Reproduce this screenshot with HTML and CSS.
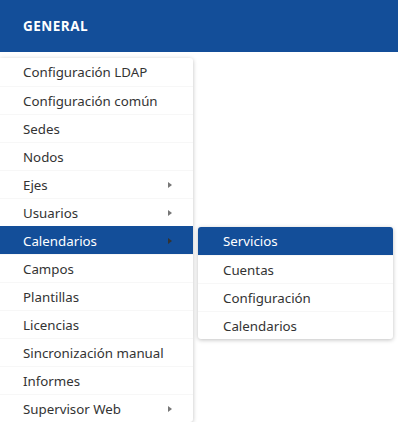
FILE: index.html
```html
<!DOCTYPE html>
<html>
<head>
<meta charset="utf-8">
<link rel="stylesheet" href="styles.css">
</head>
<body>
<header class="topbar"><span class="title">GENERAL</span></header>
<ul class="menu">
  <li class="item">Configuración LDAP</li>
  <li class="item">Configuración común</li>
  <li class="item">Sedes</li>
  <li class="item">Nodos</li>
  <li class="item has-sub">Ejes<span class="arrow"></span></li>
  <li class="item has-sub">Usuarios<span class="arrow"></span></li>
  <li class="item has-sub active">Calendarios<span class="arrow"></span>
    <ul class="menu submenu">
      <li class="item active">Servicios</li>
      <li class="item">Cuentas</li>
      <li class="item">Configuración</li>
      <li class="item">Calendarios</li>
    </ul>
  </li>
  <li class="item">Campos</li>
  <li class="item">Plantillas</li>
  <li class="item">Licencias</li>
  <li class="item">Sincronización manual</li>
  <li class="item">Informes</li>
  <li class="item has-sub">Supervisor Web<span class="arrow"></span></li>
</ul>
</body>
</html>
```
FILE: styles.css
```css
html, body {
  margin: 0;
  padding: 0;
  background: #ffffff;
  font-family: "Noto Sans", "Open Sans", sans-serif;
}
.topbar {
  height: 52px;
  background: #134e99;
  display: flex;
  align-items: center;
  padding-left: 23px;
}
.title {
  color: #ffffff;
  font-family: "Open Sans", sans-serif;
  font-weight: 700;
  font-size: 13.5px;
  letter-spacing: 0.5px;
}
.menu {
  list-style: none;
  margin: 6px 0 0 0;
  padding: 0;
  width: 193px;
  background: #fff;
  border-radius: 0 3px 3px 0;
  box-shadow: 0 1px 4px rgba(0,0,0,0.25);
}
.item {
  position: relative;
  height: 28px;
  line-height: 28px;
  padding-left: 23px;
  font-size: 13.3px;
  color: #333333;
  border-top: 1px solid #f7f7f7;
  box-sizing: border-box;
}
.item:first-child { border-top: none; }
.item.active {
  background: #134e99;
  color: #ffffff;
  border-top-color: #134e99;
}
.arrow {
  position: absolute;
  left: 168px;
  top: 11px;
  width: 0;
  height: 0;
  border-top: 3.5px solid transparent;
  border-bottom: 3.5px solid transparent;
  border-left: 4px solid #777;
}
.active > .arrow { border-left-color: #333; }
.submenu {
  position: absolute;
  left: 198px;
  top: 0;
  margin: 0;
  width: 195px;
  border-radius: 3px;
  overflow: hidden;
}
.submenu .item {
  padding-left: 25px;
  color: #333;
}
.submenu .item.active { color: #fff; }
```
